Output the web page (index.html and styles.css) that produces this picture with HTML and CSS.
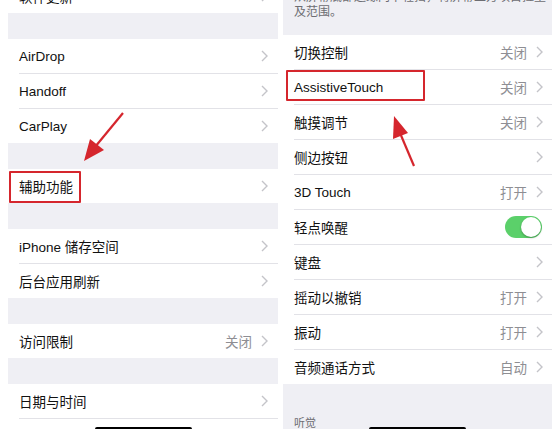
FILE: index.html
```html
<!DOCTYPE html>
<html lang="zh-CN">
<head>
<meta charset="utf-8">
<title>设置</title>
<link rel="stylesheet" href="styles.css">
</head>
<body>
<div class="screen">
  <div class="panel">
    <div class="group cut">
      <div class="row"><span class="label">软件更新</span><svg class="chev" viewBox="0 0 7 12"><polyline points="1,1 6,6 1,11"/></svg></div>
    </div>
    <div class="gap"></div>
    <div class="group">
      <div class="row"><span class="label">AirDrop</span><svg class="chev" viewBox="0 0 7 12"><polyline points="1,1 6,6 1,11"/></svg></div>
      <div class="row"><span class="label">Handoff</span><svg class="chev" viewBox="0 0 7 12"><polyline points="1,1 6,6 1,11"/></svg></div>
      <div class="row"><span class="label">CarPlay</span><svg class="chev" viewBox="0 0 7 12"><polyline points="1,1 6,6 1,11"/></svg></div>
    </div>
    <div class="gap"></div>
    <div class="group">
      <div class="row"><span class="label">辅助功能</span><svg class="chev" viewBox="0 0 7 12"><polyline points="1,1 6,6 1,11"/></svg></div>
    </div>
    <div class="gap"></div>
    <div class="group">
      <div class="row"><span class="label">iPhone 储存空间</span><svg class="chev" viewBox="0 0 7 12"><polyline points="1,1 6,6 1,11"/></svg></div>
      <div class="row"><span class="label">后台应用刷新</span><svg class="chev" viewBox="0 0 7 12"><polyline points="1,1 6,6 1,11"/></svg></div>
    </div>
    <div class="gap"></div>
    <div class="group">
      <div class="row"><span class="label">访问限制</span><span class="value">关闭</span><svg class="chev" viewBox="0 0 7 12"><polyline points="1,1 6,6 1,11"/></svg></div>
    </div>
    <div class="gap"></div>
    <div class="group">
      <div class="row"><span class="label">日期与时间</span><svg class="chev" viewBox="0 0 7 12"><polyline points="1,1 6,6 1,11"/></svg></div>
      <div class="row"><span class="label">键盘</span><svg class="chev" viewBox="0 0 7 12"><polyline points="1,1 6,6 1,11"/></svg></div>
    </div>
    <div class="home"></div>
  </div>

  <div class="panel right">
    <div class="header">
      <p class="note">从屏幕底部边缘向下轻扫，将屏幕上方项目拉至可<br>及范围。</p>
    </div>
    <div class="group">
      <div class="row"><span class="label">切换控制</span><span class="value">关闭</span><svg class="chev" viewBox="0 0 7 12"><polyline points="1,1 6,6 1,11"/></svg></div>
      <div class="row"><span class="label">AssistiveTouch</span><span class="value">关闭</span><svg class="chev" viewBox="0 0 7 12"><polyline points="1,1 6,6 1,11"/></svg></div>
      <div class="row"><span class="label">触摸调节</span><span class="value">关闭</span><svg class="chev" viewBox="0 0 7 12"><polyline points="1,1 6,6 1,11"/></svg></div>
      <div class="row"><span class="label">侧边按钮</span><svg class="chev" viewBox="0 0 7 12"><polyline points="1,1 6,6 1,11"/></svg></div>
      <div class="row"><span class="label">3D Touch</span><span class="value">打开</span><svg class="chev" viewBox="0 0 7 12"><polyline points="1,1 6,6 1,11"/></svg></div>
      <div class="row"><span class="label">轻点唤醒</span><span class="toggle"><span class="knob"></span></span></div>
      <div class="row"><span class="label">键盘</span><svg class="chev" viewBox="0 0 7 12"><polyline points="1,1 6,6 1,11"/></svg></div>
      <div class="row"><span class="label">摇动以撤销</span><span class="value">打开</span><svg class="chev" viewBox="0 0 7 12"><polyline points="1,1 6,6 1,11"/></svg></div>
      <div class="row"><span class="label">振动</span><span class="value">打开</span><svg class="chev" viewBox="0 0 7 12"><polyline points="1,1 6,6 1,11"/></svg></div>
      <div class="row"><span class="label">音频通话方式</span><span class="value">自动</span><svg class="chev" viewBox="0 0 7 12"><polyline points="1,1 6,6 1,11"/></svg></div>
    </div>
    <div class="section-title">听觉</div>
    <div class="home"></div>
  </div>

  <div class="mark mark-left"></div>
  <div class="mark mark-right"></div>
  <svg class="arrows" viewBox="0 0 552 429" width="552" height="429">
    <line x1="123" y1="113" x2="95" y2="147" />
    <polygon points="84,161 90,139 104,150" />
    <line x1="414" y1="166" x2="400" y2="133" />
    <polygon points="394,116 393,139 408,133" />
  </svg>
</div>
</body>
</html>
```
FILE: styles.css
```css
* { box-sizing: border-box; }

html, body {
  margin: 0;
  padding: 0;
  background: #ffffff;
}

body {
  font-family: "Liberation Sans", "Noto Sans CJK SC", sans-serif;
  font-size: 13.5px;
  color: #111111;
}

.screen {
  position: relative;
  width: 552px;
  height: 429px;
  overflow: hidden;
  display: flex;
  gap: 5px;
  padding-left: 8px;
}

.panel {
  position: relative;
  width: 270px;
  height: 429px;
  background: #efeff4;
  overflow: hidden;
  flex: none;
}

.panel.right {
  width: 269px;
}

.group {
  background: #ffffff;
}

.group.cut {
  margin-top: -21px;
}

.gap {
  height: 26px;
}

.row {
  margin-left: 11px;
  height: 34px;
  box-sizing: content-box;
  display: flex;
  align-items: center;
  padding-right: 9px;
}

.row + .row {
  border-top: 1px solid #e2e2e7;
}

.label {
  flex: 1;
  white-space: nowrap;
}

.value {
  color: #8e8e93;
  margin-right: 9px;
}

.chev {
  width: 7px;
  height: 12px;
  flex: none;
}

.chev polyline {
  fill: none;
  stroke: #c4c4c9;
  stroke-width: 1.4;
}

.panel:first-child .row {
  padding-right: 10px;
}

.header {
  display: flow-root;
  height: 35px;
  padding-left: 11px;
}

.note {
  margin: -10px 0 0;
  font-size: 12px;
  line-height: 15px;
  color: #6d6d72;
  white-space: nowrap;
}

.toggle {
  position: relative;
  width: 37px;
  height: 22px;
  border-radius: 11px;
  background: #5bd06a;
  margin-right: 1px;
}

.knob {
  position: absolute;
  right: 1px;
  top: 1px;
  width: 20px;
  height: 20px;
  border-radius: 50%;
  background: #ffffff;
  box-shadow: 0 1px 2px rgba(0, 0, 0, 0.3);
}

.section-title {
  margin-top: 30px;
  padding-left: 11px;
  font-size: 11px;
  color: #6d6d72;
}

.home {
  position: absolute;
  bottom: -2px;
  width: 97px;
  height: 4px;
  border-radius: 2px;
  background: #000000;
  left: 87px;
}

.panel.right .home {
  left: 86px;
}

.mark {
  position: absolute;
  border: 2px solid #d5262d;
  border-radius: 1px;
}

.mark-left {
  left: 9px;
  top: 171px;
  width: 72px;
  height: 32px;
}

.mark-right {
  left: 286px;
  top: 70px;
  width: 139px;
  height: 31px;
}

.arrows {
  position: absolute;
  left: 0;
  top: 0;
}

.arrows line {
  stroke: #d5262d;
  stroke-width: 2.2;
}

.arrows polygon {
  fill: #d5262d;
}
```
